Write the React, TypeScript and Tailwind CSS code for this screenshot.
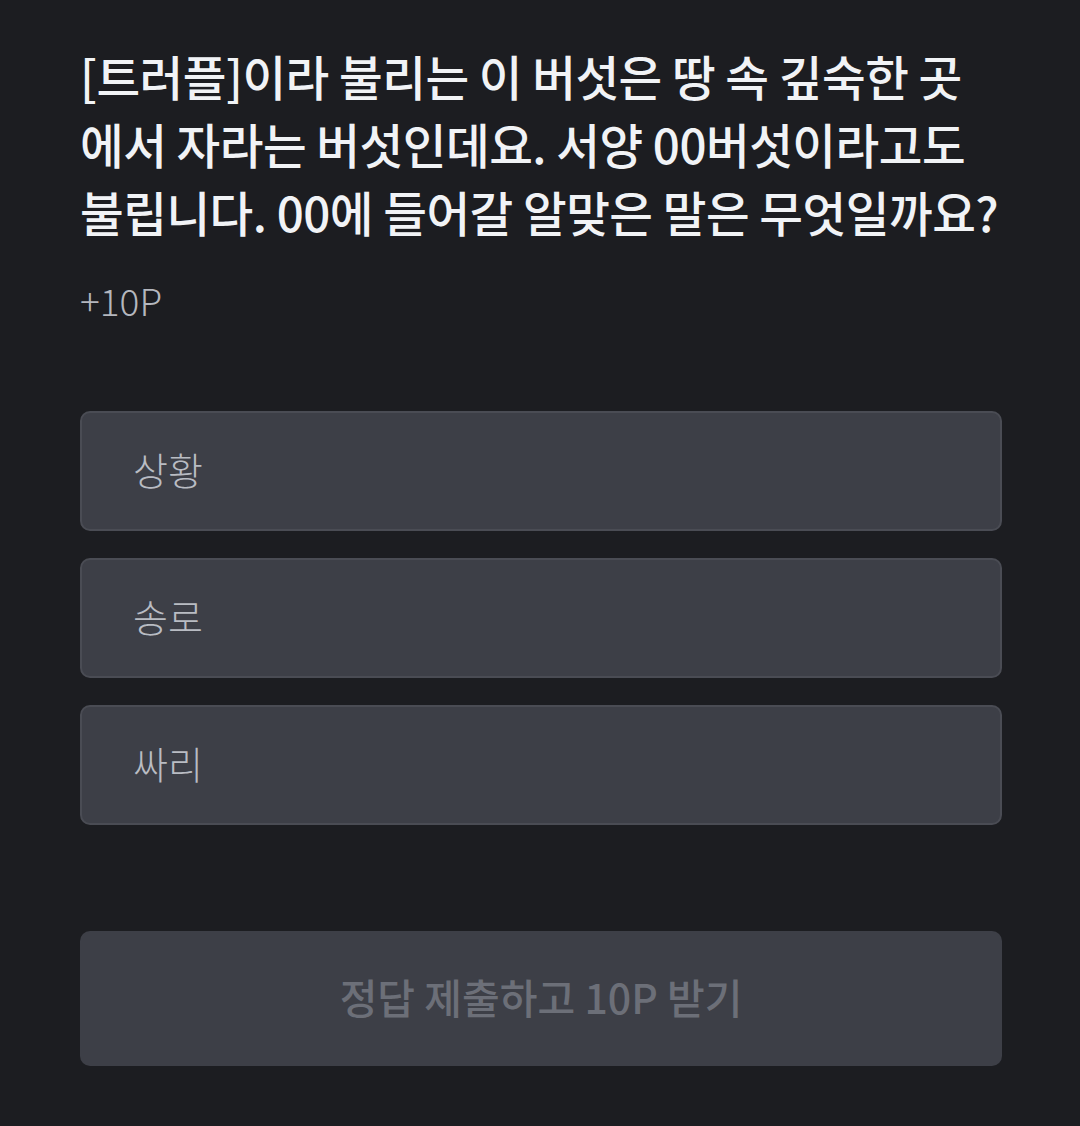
import React from 'react';

export default function App() {
  const options = ['상황', '송로', '싸리'];

  return (
    <div
      className="min-h-[1126px] w-full bg-[#1c1d21] px-[80px] pt-[42px]"
      style={{ fontFamily: '"Noto Sans CJK KR", "Noto Sans", sans-serif' }}
    >
      <h1 className="text-[47.5px] font-medium leading-[68px] tracking-[-0.5px] text-[#f1f3f6] whitespace-nowrap">
        [트러플]이라 불리는 이 버섯은 땅 속 깊숙한 곳
        <br />
        에서 자라는 버섯인데요. 서양 00버섯이라고도
        <br />
        불립니다. 00에 들어갈 알맞은 말은 무엇일까요?
      </h1>
      <p className="mt-[30px] text-[37px] font-light leading-[48px] text-[#b4b7be]">+10P</p>

      <div className="mt-[87px] flex w-[922px] flex-col gap-[27px]">
        {options.map((option, index) => (
          <div
            key={index}
            className="flex h-[120px] items-center rounded-[10px] border-2 border-[#4a4c54] bg-[#3d3f47] pb-[6px] pl-[51px]"
          >
            <span className="text-[38px] font-light text-[#b9bcc3]">{option}</span>
          </div>
        ))}
      </div>

      <button className="mt-[106px] flex h-[135px] w-[922px] items-center justify-center rounded-[10px] bg-[#3d3f47] pb-[4px]">
        <span className="text-[41px] font-medium text-[#6c6f78]">정답 제출하고 10P 받기</span>
      </button>
    </div>
  );
}
